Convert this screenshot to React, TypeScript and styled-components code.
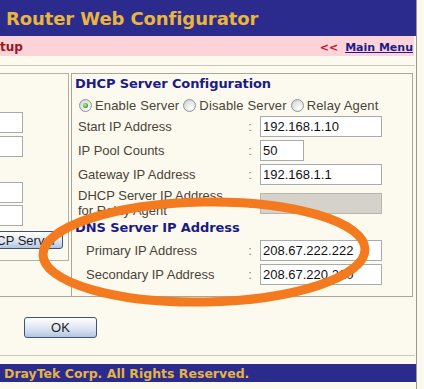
import React from 'react';
import styled, { createGlobalStyle } from 'styled-components';

const GlobalStyle = createGlobalStyle`
  html, body {
    margin: 0;
    padding: 0;
    background: #fcf9ef;
  }
  body {
    font-family: 'Liberation Sans', Arial, sans-serif;
    overflow: hidden;
  }
`;

const Screen = styled.div`
  position: relative;
  width: 424px;
  height: 389px;
  overflow: hidden;
  background: #fcf9ef;
`;

const Page = styled.div`
  width: 416px;
  height: 389px;
  border-right: 1px solid #9b988d;
  background: #fcf9ef;
`;

const Header = styled.div`
  height: 36px;
  display: flex;
  align-items: center;
  padding-left: 6px;
  background: #2a2b8d;
`;

const Title = styled.h1`
  margin: 0;
  font-family: 'DejaVu Sans', Verdana, sans-serif;
  font-size: 18px;
  font-weight: bold;
  color: #e9b53d;
  letter-spacing: -0.1px;
`;

const NavBar = styled.div`
  height: 20px;
  margin-right: 2px;
  display: flex;
  align-items: center;
  justify-content: space-between;
  padding: 2px 1px 0 0;
  box-sizing: border-box;
  background: #fbd3d9;
  font-family: 'DejaVu Sans', Verdana, sans-serif;
  font-size: 11px;
  font-weight: bold;
`;

const Crumb = styled.span`
  color: #a0141e;
  font-size: 12px;
`;

const MenuLink = styled.span`
  color: #c8102e;
  display: flex;
  gap: 7px;

  a {
    color: #1c1c8c;
    text-decoration: underline;
  }
`;

const Rule = styled.div<{ $gap: number }>`
  height: 1px;
  margin: ${(p) => p.$gap}px 1px 0 0;
  background: #cbc7ba;
`;

const Columns = styled.div`
  margin-top: 7px;
  margin-right: 3px;
  display: flex;
  align-items: flex-start;
  gap: 2px;
  border-bottom: 1px solid #a9a69c;
`;

const SideBox = styled.div`
  width: 68px;
  flex: none;
  display: flex;
  flex-direction: column;
  align-items: flex-end;
  padding: 38px 0 11px;
  border-top: 1px solid #b3b0a6;
  border-right: 1px solid #b3b0a6;
  border-bottom: 1px solid #b3b0a6;
  overflow: hidden;
`;

const SideItem = styled.div<{ $top: number; $right: number }>`
  margin-top: ${(p) => p.$top}px;
  margin-right: ${(p) => p.$right}px;
  display: flex;
`;

const ConfigPanel = styled.div`
  flex: 1;
  padding: 2px 0 10px 3px;
  border: 1px solid #a9a69c;
  border-bottom: none;
`;

const SectionTitle = styled.div<{ $top?: number }>`
  margin-top: ${(p) => p.$top ?? 0}px;
  font-family: 'DejaVu Sans', Verdana, sans-serif;
  font-size: 13px;
  line-height: 16px;
  font-weight: bold;
  color: #1b1b86;
  letter-spacing: -0.1px;
`;

const RadioRow = styled.div`
  margin: 5px 0 1px 4px;
  display: flex;
  align-items: center;
  height: 16px;
  font-size: 13px;
  color: #4a4438;
`;

const RadioOption = styled.label`
  display: flex;
  align-items: center;
  gap: 3px;
  margin-right: 4px;
  letter-spacing: 0.15px;
`;

const RadioDot = styled.span<{ $checked?: boolean }>`
  width: 11px;
  height: 11px;
  border-radius: 50%;
  border: 1px solid #8c96a0;
  display: flex;
  align-items: center;
  justify-content: center;
  background: radial-gradient(circle at 65% 70%, #ffffff 0%, #e4e4e0 55%, #c8c8c2 100%);

  &::after {
    content: '';
    display: ${(p) => (p.$checked ? 'block' : 'none')};
    width: 5px;
    height: 5px;
    border-radius: 50%;
    background: radial-gradient(circle at 40% 40%, #bff2a6 0%, #3fae2a 60%, #1f7a14 100%);
  }
`;

const FieldRow = styled.div<{ $indent?: number; $height?: number; $top?: number }>`
  display: grid;
  grid-template-columns: ${(p) => 166 - (p.$indent ?? 0)}px 12px 1fr;
  align-items: center;
  height: ${(p) => p.$height ?? 24}px;
  margin-top: ${(p) => p.$top ?? 0}px;
  padding-left: ${(p) => 3 + (p.$indent ?? 0)}px;
  font-size: 13px;
  color: #4a4438;
`;

const Label = styled.span`
  line-height: 15px;
  white-space: nowrap;
`;

const Colon = styled.span`
  text-align: center;
  color: #8a8578;
`;

const Field = styled.input<{ $width: number }>`
  box-sizing: border-box;
  width: ${(p) => p.$width}px;
  height: 21px;
  margin: 0 0 0 4px;
  padding: 0 2px;
  border: 1px solid #a7abae;
  background: #ffffff;
  font-family: 'Liberation Sans', Arial, sans-serif;
  font-size: 13px;
  color: #111;
  outline: none;

  &:disabled {
    background: #d5d2cb;
    border-color: #bab6ae;
  }
`;

const SideField = styled(Field)`
  margin: 0;
`;

const XpButton = styled.button<{ $width?: number; $height: number }>`
  box-sizing: border-box;
  ${(p) => (p.$width ? `width: ${p.$width}px;` : '')}
  height: ${(p) => p.$height}px;
  padding: 0 6px 0 10px;
  border: 1px solid #3d5476;
  border-radius: 3px;
  background: linear-gradient(#ffffff 0%, #eef2f8 30%, #d0dcee 70%, #b3c4de 100%);
  font-family: 'Liberation Sans', Arial, sans-serif;
  font-size: 13px;
  color: #1d1d1d;
  white-space: nowrap;
  flex: none;
`;

const Actions = styled.div`
  margin-top: 20px;
  padding-left: 24px;
  display: flex;
`;

const Footer = styled.div`
  margin-top: 8px;
  height: 18px;
  display: flex;
  align-items: center;
  padding-left: 4px;
  background: #2a2b8d;
  font-family: 'DejaVu Sans', Verdana, sans-serif;
  font-size: 12.5px;
  font-weight: bold;
  color: #e3b446;
`;

const Highlight = styled.svg`
  position: absolute;
  left: 0;
  top: 0;
  pointer-events: none;
`;

const App: React.FC = () => {
  return (
    <>
      <GlobalStyle />
      <Screen>
        <Page>
          <Header>
            <Title>Router Web Configurator</Title>
          </Header>
          <NavBar>
            <Crumb>tup</Crumb>
            <MenuLink>
              <span>&lt;&lt;</span>
              <a href="#">Main Menu</a>
            </MenuLink>
          </NavBar>
          <Rule $gap={9} />

          <Columns>
            <SideBox>
              <SideItem $top={0} $right={45}>
                <SideField $width={60} readOnly value="" />
              </SideItem>
              <SideItem $top={3} $right={45}>
                <SideField $width={60} readOnly value="" />
              </SideItem>
              <SideItem $top={25} $right={45}>
                <SideField $width={60} readOnly value="" />
              </SideItem>
              <SideItem $top={2} $right={45}>
                <SideField $width={60} readOnly value="" />
              </SideItem>
              <SideItem $top={5} $right={5}>
                <XpButton $height={18}>DHCP Server</XpButton>
              </SideItem>
            </SideBox>

            <ConfigPanel>
              <SectionTitle>DHCP Server Configuration</SectionTitle>
              <RadioRow>
                <RadioOption>
                  <RadioDot $checked />
                  Enable Server
                </RadioOption>
                <RadioOption>
                  <RadioDot />
                  Disable Server
                </RadioOption>
                <RadioOption>
                  <RadioDot />
                  Relay Agent
                </RadioOption>
              </RadioRow>

              <FieldRow>
                <Label>Start IP Address</Label>
                <Colon>:</Colon>
                <Field $width={122} readOnly value="192.168.1.10" />
              </FieldRow>
              <FieldRow>
                <Label>IP Pool Counts</Label>
                <Colon>:</Colon>
                <Field $width={44} readOnly value="50" />
              </FieldRow>
              <FieldRow>
                <Label>Gateway IP Address</Label>
                <Colon>:</Colon>
                <Field $width={122} readOnly value="192.168.1.1" />
              </FieldRow>
              <FieldRow $height={30} $top={2}>
                <Label>
                  DHCP Server IP Address
                  <br />
                  for Relay Agent
                </Label>
                <Colon>:</Colon>
                <Field $width={122} disabled value="" />
              </FieldRow>

              <SectionTitle $top={2}>DNS Server IP Address</SectionTitle>
              <FieldRow $indent={8} $top={2}>
                <Label>Primary IP Address</Label>
                <Colon>:</Colon>
                <Field $width={122} readOnly value="208.67.222.222" />
              </FieldRow>
              <FieldRow $indent={8}>
                <Label>Secondary IP Address</Label>
                <Colon>:</Colon>
                <Field $width={122} readOnly value="208.67.220.220" />
              </FieldRow>
            </ConfigPanel>
          </Columns>

          <Actions>
            <XpButton $width={73} $height={21} style={{ padding: 0 }}>
              OK
            </XpButton>
          </Actions>
          <Rule $gap={17} />
          <Footer>DrayTek Corp. All Rights Reserved.</Footer>
        </Page>

        <Highlight width="424" height="389" viewBox="0 0 424 389">
          <ellipse
            cx="204"
            cy="252"
            rx="161"
            ry="50"
            transform="rotate(-1 204 252)"
            fill="none"
            stroke="#f47a1f"
            strokeWidth="9"
          />
        </Highlight>
      </Screen>
    </>
  );
};

export default App;
